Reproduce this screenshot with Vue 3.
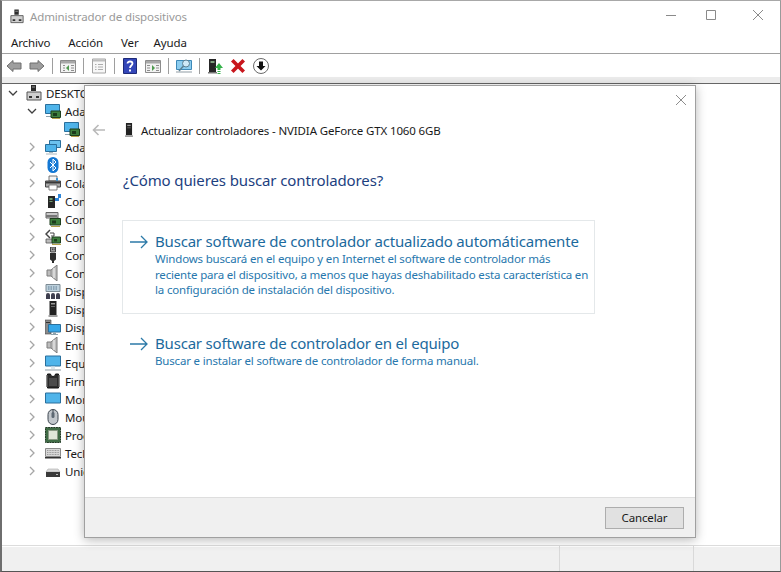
<script setup>
const menus = ['Archivo', 'Acción', 'Ver', 'Ayuda']
const tools = ['t-back', 't-fwd', '|', 't-pane1', '|', 't-props', '|', 't-help', 't-pane2', '|', 't-scan', '|', 't-update', 't-remove', 't-down']
const rows = [
  { level: 0, open: true, icon: 'i-computer', label: 'DESKTOP-7H2K4LM' },
  { level: 1, open: true, icon: 'i-gpu', label: 'Adaptadores de pantalla' },
  { level: 2, leaf: true, icon: 'i-gpu', label: 'NVIDIA GeForce GTX 1060 6GB' },
  { level: 1, icon: 'i-net', label: 'Adaptadores de red' },
  { level: 1, icon: 'i-bt', label: 'Bluetooth' },
  { level: 1, icon: 'i-print', label: 'Colas de impresión' },
  { level: 1, icon: 'i-store', label: 'Controladoras ATA/ATAPI' },
  { level: 1, icon: 'i-card', label: 'Controladoras de almacenamiento' },
  { level: 1, icon: 'i-bus', label: 'Controladoras de bus serie universal' },
  { level: 1, icon: 'i-usb', label: 'Controladoras de host' },
  { level: 1, icon: 'i-speaker', label: 'Controladoras de sonido y vídeo' },
  { level: 1, icon: 'i-hid', label: 'Dispositivos de interfaz humana' },
  { level: 1, icon: 'i-tower', label: 'Dispositivos de software' },
  { level: 1, icon: 'i-sys', label: 'Dispositivos del sistema' },
  { level: 1, icon: 'i-speaker', label: 'Entradas y salidas de audio' },
  { level: 1, icon: 'i-pc', label: 'Equipo' },
  { level: 1, icon: 'i-chip', label: 'Firmware' },
  { level: 1, icon: 'i-mon', label: 'Monitores' },
  { level: 1, icon: 'i-mouse', label: 'Mouse y otros dispositivos señaladores' },
  { level: 1, icon: 'i-cpu', label: 'Procesadores' },
  { level: 1, icon: 'i-kbd', label: 'Teclados' },
  { level: 1, icon: 'i-drive', label: 'Unidades de disco' }
]
</script>

<template>
  <div class="window">
    <svg class="sprite" width="0" height="0">
      <defs>
        <symbol id="i-computer" viewBox="0 0 16 16">
          <path d="M5 0h5v6H5z" fill="#2b2b2b"/><path d="M6 1.500h3v1H6z" fill="#999"/>
          <path d="M1 7h14v8H1z" fill="#cfcfcf" stroke="#555"/><path d="M3 11h3v2H3zM10 11h3v2h-3z" fill="#333"/>
        </symbol>
        <symbol id="i-gpu" viewBox="0 0 16 16">
          <path d="M.5 1.500h14v9H.5z" fill="#4fb4ea" stroke="#2a6f9c"/><path d="M1 13h9v1H1z" fill="#8fa3ad"/>
          <path d="M6 8h9.500v6.500H6z" fill="#3d7f3d" stroke="#1f3f1f"/><path d="M8 10h4v3H8z" fill="#1c3c1c"/><path d="M7 15h8v1H7z" fill="#b5a14a"/>
        </symbol>
        <symbol id="i-net" viewBox="0 0 16 16">
          <path d="M4.500 1.500h11v7h-11z" fill="#6cc2ee" stroke="#2a6f9c"/>
          <path d="M.5 5.500h11v7H.5z" fill="#4fb4ea" stroke="#2a6f9c"/><path d="M4 13h4v1H4zM1 14.500h11v1H1z" fill="#a9b8c0"/>
        </symbol>
        <symbol id="i-bt" viewBox="0 0 16 16">
          <rect x="2.500" y="0" width="11" height="16" rx="5.500" fill="#1478d4"/>
          <path d="M5 5l6 6-3 3V2l3 3-6 6" fill="none" stroke="#fff" stroke-width="1"/>
        </symbol>
        <symbol id="i-print" viewBox="0 0 16 16">
          <path d="M4 1h8v5H4z" fill="#f4f4f4" stroke="#555" stroke-width=".8"/>
          <path d="M.5 6h15v6H.5z" fill="#a9a9a9" stroke="#444"/><path d="M1 6.500h14v2H1z" fill="#3a3a3a"/>
          <path d="M4 10h8v5H4z" fill="#fff" stroke="#666" stroke-width=".8"/><path d="M11 3h2v3h-2z" fill="#3f92cf"/>
        </symbol>
        <symbol id="i-store" viewBox="0 0 16 16">
          <path d="M3 3h7v12H3z" fill="#262626"/><path d="M4.500 5h3v2h-3zM4.500 8h3v1h-3z" fill="#6f9f6f"/>
          <path d="M10 5h3V1h3v4h-2v3h-4z" fill="#2f86d8"/>
        </symbol>
        <symbol id="i-card" viewBox="0 0 16 16">
          <path d="M1 1.500h12v5.500H1z" fill="#c8c8c8" stroke="#666"/><path d="M1 4h11v2H1z" fill="#777"/>
          <path d="M5 7.500h10.500v6.500H5z" fill="#3d7f3d" stroke="#1f3f1f"/><path d="M7 9.500h4v3H7z" fill="#1c3c1c"/><path d="M6 15h9v1H6z" fill="#b5a14a"/>
        </symbol>
        <symbol id="i-bus" viewBox="0 0 16 16">
          <path d="M5 1L1 5l4 4" fill="none" stroke="#444" stroke-width="1.500"/><path d="M5 4h4v3H6" fill="none" stroke="#444"/>
          <path d="M1 10h7v4H1z" fill="#bbb" stroke="#555" stroke-width=".8"/>
          <path d="M7 8h8.500v6H7z" fill="#3d7f3d" stroke="#1f3f1f"/><path d="M9 10h3v2.500H9z" fill="#1c3c1c"/><path d="M7 15h9v1H7z" fill="#b5a14a"/>
        </symbol>
        <symbol id="i-usb" viewBox="0 0 16 16">
          <path d="M5.500 0h5v5h-5z" fill="#9a9a9a" stroke="#444"/><path d="M7 1.500h.8v1.500H7zM8.700 1.500h.8v1.500h-.8z" fill="#333"/>
          <path d="M5 6h6v6.500L9 14v2H7v-2l-2-1.500z" fill="#2d2d2d"/>
        </symbol>
        <symbol id="i-speaker" viewBox="0 0 16 16">
          <path d="M2 5h4l6-5v16l-6-5H2z" fill="#bdbdbd" stroke="#7c7c7c"/><path d="M6 5v6" stroke="#888"/><path d="M9 3v10" stroke="#e2e2e2" stroke-width="1.500"/>
        </symbol>
        <symbol id="i-hid" viewBox="0 0 16 16">
          <path d="M1 1.500h14v7H1z" fill="#bcd0dc" stroke="#7d8b94"/>
          <path d="M3 3.500h1.500v1H3zM5.500 3.500H7v1H5.500zM8 3.500h1.500v1H8zM10.500 3.500H12v1h-1.500zM3 5.500h1.500v1H3zM5.500 5.500H7v1H5.500zM8 5.500h1.500v1H8zM10.500 5.500H12v1h-1.500z" fill="#5f7c92"/>
          <path d="M1 16v-4a2 2 0 0 1 4 0v4zM6 16v-4a2 2 0 0 1 4 0v4zM11 16v-4a2 2 0 0 1 4 0v4z" fill="#3f3f4f"/>
        </symbol>
        <symbol id="i-tower" viewBox="0 0 16 16">
          <path d="M4.500 0h7v14h-7z" fill="#222"/><path d="M6 2h4v1.500H6z" fill="#9a9a9a"/><path d="M6 5h4v1H6z" fill="#666"/><path d="M3.500 14h9v2h-9z" fill="#9f9f9f"/>
        </symbol>
        <symbol id="i-sys" viewBox="0 0 16 16">
          <path d="M0 1h6v14H0z" fill="#8a8a8a" stroke="#444" stroke-width=".6"/><path d="M1 3h4v1H1z" fill="#333"/>
          <path d="M3.500 5.500h12v7.500h-12z" fill="#35a6e8" stroke="#2a6f9c"/><path d="M8 13.500h3v1.500H8zM6 15h7v1H6z" fill="#8fa3ad"/>
        </symbol>
        <symbol id="i-pc" viewBox="0 0 16 16">
          <path d="M.5 1h15v10h-15z" fill="#4fb4ea" stroke="#2a6f9c"/><path d="M6 11.500h4V14H6z" fill="#dde6ec"/><path d="M0 14.500h16v1H0z" fill="#8e9ba3"/>
        </symbol>
        <symbol id="i-chip" viewBox="0 0 16 16">
          <path d="M2.500 1h3a2.500 2.500 0 0 0 5 0h3v14h-11z" fill="#2b2b2b" stroke="#111"/>
          <path d="M1 2h1.500v12H1zM13.500 2H15v12h-1.500z" fill="#888"/><path d="M4 5h8v8H4z" fill="#4a4a4a"/>
        </symbol>
        <symbol id="i-mon" viewBox="0 0 16 16">
          <path d="M.5 2h15v10h-15z" fill="#4fb4ea" stroke="#2a6f9c"/>
        </symbol>
        <symbol id="i-mouse" viewBox="0 0 16 16">
          <rect x="3" y=".5" width="10" height="15" rx="5" fill="#c2c7cc" stroke="#3d4650"/>
          <path d="M8 1v6" stroke="#3d4650"/><rect x="6.500" y="3" width="3" height="6" rx="1.500" fill="#5d6873"/>
        </symbol>
        <symbol id="i-cpu" viewBox="0 0 16 16">
          <path d="M.5.500h15v15H.5z" fill="#3f6b45" stroke="#213a25" stroke-dasharray="2 .6"/><path d="M3.500 3.500h9v9h-9z" fill="#dfe6d8" stroke="#8b9b86"/>
        </symbol>
        <symbol id="i-kbd" viewBox="0 0 16 16">
          <path d="M.5 3.500h15v8h-15z" fill="#d8d8d8" stroke="#8a8a8a"/>
          <path d="M2 5.500h12M2 7.500h12M2 9.500h12" stroke="#9a9a9a" stroke-dasharray="1 .6"/><path d="M0 12h16v1.500H0z" fill="#333"/>
        </symbol>
        <symbol id="i-drive" viewBox="0 0 16 16">
          <path d="M3 6h10l2 3H1z" fill="#dcdcdc" stroke="#aaa" stroke-width=".6"/><path d="M1 9h14v5H1z" fill="#3a3a3a"/><path d="M11 11h2v1h-2z" fill="#bdbdbd"/>
        </symbol>

        <symbol id="t-back" viewBox="0 0 16 16">
          <path d="M1 8l6-5.500V5h8v6H7v2.500z" fill="#9e9e9e" stroke="#6e6e6e"/>
        </symbol>
        <symbol id="t-fwd" viewBox="0 0 16 16">
          <path d="M15 8L9 2.500V5H1v6h8v2.500z" fill="#9e9e9e" stroke="#6e6e6e"/>
        </symbol>
        <symbol id="t-pane1" viewBox="0 0 16 16">
          <path d="M.5 2.500h15v12H.5z" fill="#f2f2f2" stroke="#8c8c8c"/><path d="M1 3h14v2.500H1z" fill="#a8a8a8"/>
          <path d="M3 7h2v1H3zM3 9.500h2v1H3zM3 12h2v1H3zM11 7h3v1h-3zM11 9.500h3v1h-3zM11 12h3v1h-3z" fill="#8d8d8d"/><path d="M9 7v6L6 10z" fill="#4f9a4f"/>
        </symbol>
        <symbol id="t-props" viewBox="0 0 16 16">
          <path d="M1.500 1h13v14h-13z" fill="#f7f7f7" stroke="#a5a5a5"/><path d="M2 1.500h12v2H2z" fill="#bdbdbd"/>
          <path d="M4 6h1.500v1H4zM7 6h5v1H7zM4 8.500h1.500v1H4zM7 8.500h5v1H7zM4 11h1.500v1H4zM7 11h5v1H7z" fill="#adadad"/>
        </symbol>
        <symbol id="t-help" viewBox="0 0 14 16">
          <path d="M.5.500h13v15H.5z" fill="#3346b8" stroke="#1e2a78"/>
          <path d="M4.500 5.500C4.500 2.800 9.500 2.800 9.500 5.500 9.500 7.500 7 7.500 7 10" fill="none" stroke="#fff" stroke-width="1.800"/><path d="M6 11.500h2v2H6z" fill="#fff"/>
        </symbol>
        <symbol id="t-pane2" viewBox="0 0 16 16">
          <path d="M.5 2.500h15v12H.5z" fill="#f2f2f2" stroke="#8c8c8c"/><path d="M1 3h14v2.500H1z" fill="#a8a8a8"/>
          <path d="M2 7h3v1H2zM2 9.500h3v1H2zM2 12h3v1H2zM11 7h3v1h-3zM11 9.500h3v1h-3zM11 12h3v1h-3z" fill="#8d8d8d"/><path d="M7 7v6l3-3z" fill="#4f9a4f"/>
        </symbol>
        <symbol id="t-scan" viewBox="0 0 16 16">
          <path d="M.5 2.500h15v9H.5z" fill="#8ccdf0" stroke="#3d89b8"/><path d="M0 13.500h16v1H0z" fill="#8e9ba3"/>
          <circle cx="10" cy="5.500" r="3.500" fill="#cfeaf8" stroke="#5b7f92"/><path d="M7.500 8L3 13" stroke="#5b7f92" stroke-width="1.500"/>
        </symbol>
        <symbol id="t-update" viewBox="0 0 16 16">
          <path d="M2 1h7v13H2z" fill="#262626"/><path d="M3.500 3h4v2h-4z" fill="#7fa07f"/><path d="M1 14h9v1.500H1z" fill="#777"/>
          <path d="M12 5l4 5h-2.500v2h-3v-2H8z" fill="#35b24a"/><path d="M10.500 13h3v1h-3zM10.500 15h3v1h-3z" fill="#35b24a"/>
        </symbol>
        <symbol id="t-remove" viewBox="0 0 14 14">
          <path d="M2 2l10 10M12 2L2 12" stroke="#c8161d" stroke-width="3.200"/>
        </symbol>
        <symbol id="t-down" viewBox="0 0 16 16">
          <circle cx="8" cy="8" r="7.500" fill="#fff" stroke="#6a6a6a"/><path d="M6 3.500h4V8h2.500L8 12.500 3.500 8H6z" fill="#111"/>
        </symbol>
      </defs>
    </svg>

    <header class="titlebar">
      <svg class="title-icon"><use href="#i-computer"/></svg>
      <span class="title-text">Administrador de dispositivos</span>
      <div class="controls">
        <svg class="ctl" width="10" height="12" viewBox="0 0 10 12"><path d="M0 6.500h10" stroke="#8a8a8a"/></svg>
        <svg class="ctl" width="10" height="12" viewBox="0 0 10 12"><path d="M.5 1.500h9v9h-9z" fill="none" stroke="#8a8a8a"/></svg>
        <svg class="ctl" width="10" height="12" viewBox="0 0 10 12"><path d="M0 1l10 10M10 1L0 11" stroke="#8a8a8a" fill="none"/></svg>
      </div>
    </header>

    <nav class="menubar">
      <span v-for="m in menus" :key="m" class="menu-item">{{ m }}</span>
    </nav>

    <div class="toolbar">
      <template v-for="(t, i) in tools" :key="i">
        <i v-if="t === '|'" class="sep"></i>
        <svg v-else class="tool"><use :href="'#' + t"/></svg>
      </template>
    </div>

    <div class="band"></div>

    <main class="tree">
      <div v-for="r in rows" :key="r.label" class="row" :class="'lv' + r.level">
        <span class="chev-box">
          <svg v-if="!r.leaf && r.open" width="10" height="6" viewBox="0 0 10 6"><path d="M1 1l4 4 4-4" fill="none" stroke="#404040" stroke-width="1.300"/></svg>
          <svg v-else-if="!r.leaf" width="6" height="10" viewBox="0 0 6 10"><path d="M1 1l4 4-4 4" fill="none" stroke="#a6a6a6" stroke-width="1.300"/></svg>
        </span>
        <svg class="row-icon"><use :href="'#' + r.icon"/></svg>
        <span class="row-label">{{ r.label }}</span>
      </div>
    </main>

    <footer class="status">
      <div class="cell grow"></div>
      <div class="cell mid"></div>
      <div class="cell end"></div>
    </footer>

    <section class="dialog">
      <div class="dlg-body">
        <div class="dlg-close">
          <svg width="10" height="10" viewBox="0 0 10 10"><path d="M0 0l10 10M10 0L0 10" stroke="#8d8d8d" fill="none"/></svg>
        </div>
        <div class="dlg-head">
          <svg class="dlg-back" width="13" height="12" viewBox="0 0 13 12"><path d="M13 6H1.500M6.500 1l-5 5 5 5" fill="none" stroke="#b9b9b9" stroke-width="1.600"/></svg>
          <svg class="dlg-dev" width="14" height="14"><use href="#i-tower"/></svg>
          <span class="dlg-title">Actualizar controladores - NVIDIA GeForce GTX 1060 6GB</span>
        </div>
        <h1 class="heading">¿Cómo quieres buscar controladores?</h1>
        <div class="option first">
          <svg class="opt-arrow" width="18" height="14" viewBox="0 0 18 14"><path d="M0 7h16.500M11 1l6 6-6 6" fill="none" stroke="#2c7aa8" stroke-width="1.300"/></svg>
          <div class="opt-text">
            <div class="opt-title">Buscar software de controlador actualizado automáticamente</div>
            <p class="opt-desc">Windows buscará en el equipo y en Internet el software de controlador más<br>reciente para el dispositivo, a menos que hayas deshabilitado esta característica en<br>la configuración de instalación del dispositivo.</p>
          </div>
        </div>
        <div class="option second">
          <svg class="opt-arrow" width="18" height="14" viewBox="0 0 18 14"><path d="M0 7h16.500M11 1l6 6-6 6" fill="none" stroke="#2c7aa8" stroke-width="1.300"/></svg>
          <div class="opt-text">
            <div class="opt-title">Buscar software de controlador en el equipo</div>
            <p class="opt-desc">Buscar e instalar el software de controlador de forma manual.</p>
          </div>
        </div>
      </div>
      <div class="dlg-foot">
        <button class="cancel">Cancelar</button>
      </div>
    </section>
  </div>
</template>

<style scoped>
.window {
  position: relative;
  width: 781px;
  height: 572px;
  box-sizing: border-box;
  overflow: hidden;
  display: flex;
  flex-direction: column;
  background: #fff;
  border-top: 1px solid #a8a8a8;
  border-left: 2px solid #6e6e6e;
  border-right: 1px solid #9a9a9a;
  border-bottom: 1px solid #555;
  font-family: "Noto Sans", "Open Sans", sans-serif;
  font-size: 11.500px;
  letter-spacing: -.13px;
  color: #1a1a1a;
}
.sprite { position: absolute; }
.titlebar {
  height: 30px;
  display: flex;
  align-items: center;
  padding-left: 8px;
}
.title-icon { width: 14px; height: 15px; margin-right: 6px; }
.title-text { color: #9a9a9a; }
.controls {
  margin-left: auto;
  align-self: flex-start;
  margin-top: 8px;
  padding-right: 17px;
  display: flex;
  gap: 30px;
}
.ctl { display: block; }
.ctl + .ctl + .ctl { margin-left: 7px; }
.menubar {
  height: 22px;
  display: flex;
  align-items: center;
  padding-left: 9px;
  border-bottom: 1px solid #a0a0a0;
  gap: 18px;
}
.menu-item:last-child { margin-left: -3px; }
.toolbar {
  height: 23px;
  display: flex;
  align-items: center;
  padding-left: 4px;
  gap: 7px;
}
.tool { width: 16px; height: 16px; display: block; }
.sep { width: 1px; height: 16px; background: #9e9e9e; }
.band {
  height: 6px;
  background: #ececec;
  border-bottom: 1px solid #666;
}
.tree {
  flex: 1;
  min-height: 0;
}
.row {
  height: 18px;
  display: flex;
  align-items: center;
  white-space: nowrap;
}
.lv0 { padding-left: 3px; }
.lv1 { padding-left: 22px; }
.lv2 { padding-left: 41px; }
.chev-box {
  width: 16px;
  height: 18px;
  display: flex;
  align-items: center;
  justify-content: center;
}
.row-icon { width: 16px; height: 16px; margin-left: 5px; margin-right: 4px; }
.row-label { color: #1a1a1a; }
.status {
  height: 25px;
  display: flex;
  background: #f0f0f0;
  border-top: 1px solid #dcdcdc;
  box-shadow: inset 0 1px 0 #fff;
}
.cell { border-right: 1px solid #d9d9d9; }
.grow { width: 557px; }
.mid { width: 133px; }
.end { flex: 1; border-right: 0; }
.dialog {
  position: absolute;
  left: 82px;
  top: 84px;
  width: 612px;
  height: 453px;
  box-sizing: border-box;
  display: flex;
  flex-direction: column;
  background: #fff;
  border: 1px solid #a0a0a0;
  box-shadow: 0 2px 10px rgba(0, 0, 0, .28);
}
.dlg-body {
  flex: 1;
  position: relative;
  padding-top: 36px;
}
.dlg-close {
  position: absolute;
  top: 9px;
  right: 9px;
  line-height: 0;
}
.dlg-head {
  display: flex;
  align-items: center;
  height: 16px;
  padding-left: 7px;
}
.dlg-back { margin-right: 17px; }
.dlg-dev { margin-right: 5px; }
.heading {
  margin: 31px 0 0 38px;
  font-size: 15px;
  line-height: 22px;
  font-weight: 400;
  letter-spacing: -.12px;
  color: #1d3f7f;
}
.option {
  display: flex;
  box-sizing: border-box;
  width: 473px;
  margin-left: 37px;
  padding-left: 7px;
  border: 1px solid transparent;
}
.first {
  margin-top: 29px;
  height: 94px;
  padding-top: 10px;
  border-color: #e4e8ea;
}
.second { margin-top: 9px; padding-top: 9px; }
.opt-arrow { flex: none; margin-top: 4px; margin-right: 7px; }
.opt-title {
  font-size: 15px;
  line-height: 21px;
  letter-spacing: -.19px;
  color: #1c6a9d;
  white-space: nowrap;
}
.opt-desc {
  margin: -1px 0 0;
  font-size: 11.500px;
  line-height: 15.500px;
  letter-spacing: -.175px;
  color: #2777ad;
  white-space: nowrap;
}
.dlg-foot {
  height: 40px;
  flex: none;
  box-sizing: border-box;
  background: #f0f0f0;
  border-top: 1px solid #dedede;
  display: flex;
  justify-content: flex-end;
  align-items: center;
  padding-right: 11px;
}
.cancel {
  width: 79px;
  height: 22px;
  padding: 0;
  background: #e1e1e1;
  border: 1px solid #adadad;
  font-family: inherit;
  font-size: 11.500px;
  letter-spacing: -.13px;
  color: #1a1a1a;
}
</style>
